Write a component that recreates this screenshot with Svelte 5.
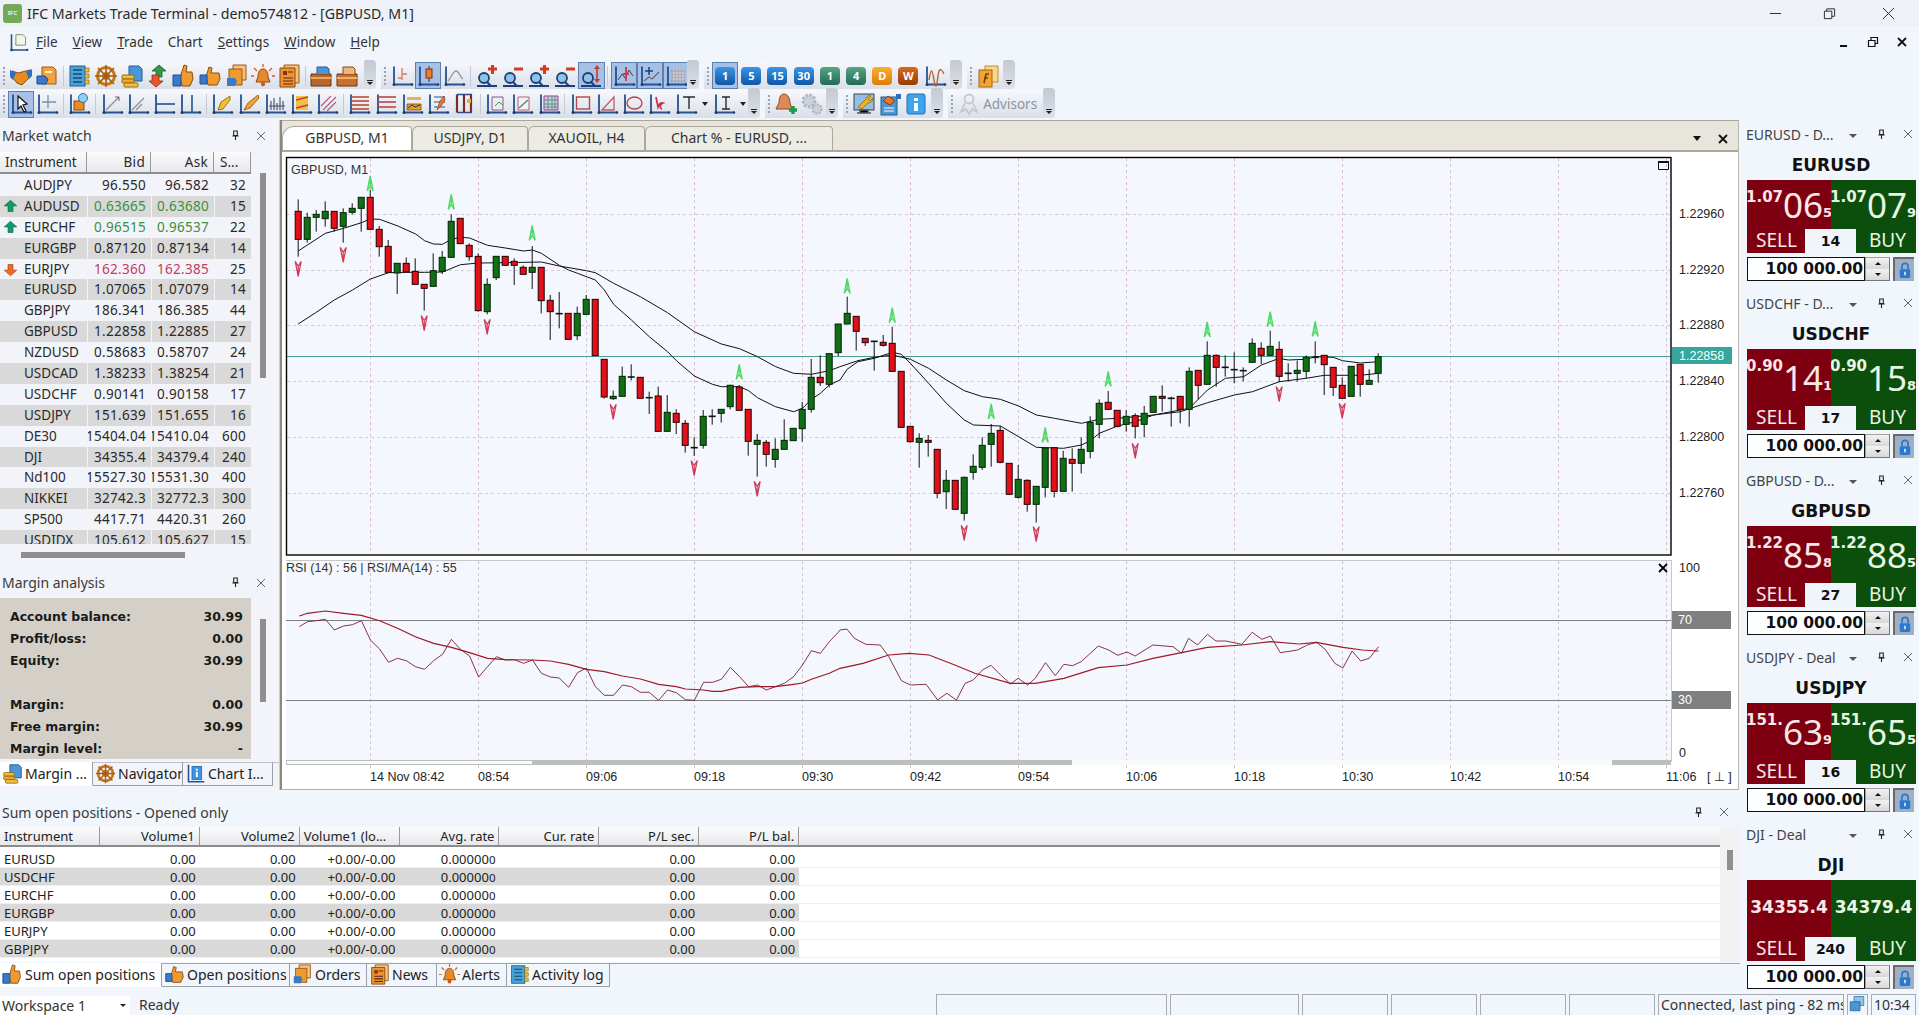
<script>
  const ax =
    '<path d="M4 2.5V20.5H22" fill="none" stroke="#27528f" stroke-width="1.8"/><circle cx="4" cy="20.5" r="1.5" fill="#1d3f75"/><circle cx="22" cy="20.5" r="1.3" fill="#1d3f75"/>';
  const mag =
    '<circle cx="9" cy="14" r="5" fill="#8fc4ea" stroke="#1d3f75" stroke-width="1.8"/><path d="M12 18l4 4M2 22h20" stroke="#1d3f75" stroke-width="2"/>';

  const ICONS = {
    handshake:
      '<path d="M3 7l6 2 4-1 8-2-1 8-7 7-5-2-5-6z" fill="#e98a1e" stroke="#8a4a10"/><path d="M1 6l6 3-3 7-3-3z" fill="#2f6fc0"/><path d="M23 5l-6 3 3 7 3-3z" fill="#2f6fc0"/>',
    dochand:
      '<path d="M7 3h11l3 3v14H7z" fill="#f3a33b" stroke="#9a5a14"/><path d="M2 12h8l3 3-2 5H2z" fill="#3a7ac8" stroke="#1d4f8f"/><path d="M10 7h7v2h-7z" fill="#fff3d8"/>',
    book:
      '<rect x="3" y="2" width="15" height="20" fill="#4aa3d8" stroke="#1f5f8f"/><path d="M6 6h9M6 10h9M6 14h9M6 18h9" stroke="#134a78" stroke-width="1.4"/><path d="M18 4h4v4h-4zM18 10h4v4h-4zM18 16h4v4h-4z" fill="#e9c13a" stroke="#8a6a10" stroke-width=".7"/>',
    wheel:
      '<circle cx="12" cy="12" r="8.5" fill="none" stroke="#c87414" stroke-width="3"/><circle cx="12" cy="12" r="3.4" fill="#f0b03a" stroke="#8a4a10"/><path d="M12 1v22M1 12h22M4 4l16 16M20 4L4 20" stroke="#a85c10" stroke-width="1.6"/>',
    coins:
      '<path d="M9 2h10l3 3v12H9z" fill="#4a96d8" stroke="#1f5f8f"/><rect x="2" y="11" width="12" height="4" rx="1" fill="#f2c040" stroke="#9a6a10"/><rect x="2" y="15" width="12" height="4" rx="1" fill="#eea52f" stroke="#9a6a10"/><rect x="4" y="19" width="14" height="4" rx="1" fill="#f2c040" stroke="#9a6a10"/>',
    updown:
      '<path d="M13 1l7 6h-4v6H10V7H6z" fill="#2f9a4a" stroke="#14602a" stroke-width=".8"/><path d="M10 23l-7-6h3v-6h7v6h4z" fill="#e8552a" stroke="#8a2a10" stroke-width=".8"/>',
    thumb:
      '<path d="M12 1l3 1-1 6h6l1 7-3 7H10l-2-8z" fill="#ef9a2e" stroke="#8a4a10"/><path d="M1 11h8v11H1z" fill="#3a7ac8" stroke="#1d4f8f"/>',
    thumb2:
      '<path d="M11 3l3 1-1 5h8l1 6-3 6H10l-2-8z" fill="#ef9a2e" stroke="#8a4a10"/><path d="M2 11h7v9H2z" fill="#3a7ac8" stroke="#1d4f8f"/>',
    orders:
      '<path d="M8 1h13v15H8z" fill="#f6c27a" stroke="#9a5a14"/><path d="M4 5h13v16H4z" fill="#f09a2e" stroke="#9a5a14"/><path d="M2 14h8l2 3-2 5H2z" fill="#3a7ac8"/>',
    bell:
      '<path d="M12 5c4 0 5 4 5 8l2 5H5l2-5c0-4 1-8 5-8z" fill="#e8882a" stroke="#8a4a10"/><circle cx="12" cy="20" r="2.2" fill="#c85a14"/><path d="M12 0v3M3 4l3 3M21 4l-3 3M0 12h3M21 12h3" stroke="#e85a2a" stroke-width="1.4"/>',
    news:
      '<path d="M7 1h15v18H7z" fill="#f6c27a" stroke="#9a5a14"/><path d="M3 4h15v19H3z" fill="#ee9233" stroke="#8a4a10"/><path d="M6 7h4v4H6z" fill="#7a3a10"/><path d="M11 8h5M6 14h10M6 17h10M6 20h10" stroke="#5a2a08" stroke-width="1.2"/>',
    case1:
      '<path d="M2 10h20v12H2z" fill="#b8662a" stroke="#6a3410"/><path d="M8 10V3h10l2 2v5" fill="#4a96d8" stroke="#1f5f8f"/><path d="M2 14h20" stroke="#e8a860" stroke-width="2"/>',
    case2:
      '<path d="M2 10h20v12H2z" fill="#c8702e" stroke="#6a3410"/><path d="M8 10V3h10l2 2v5" fill="#f0b478" stroke="#8a4a10"/><path d="M2 14h20" stroke="#eeb070" stroke-width="2"/>',
    a_bars: ax + '<path d="M12 4v12M12 10h5M12 14H8" stroke="#d8804a" stroke-width="1.3" fill="none"/>',
    a_candle: ax + '<path d="M13 2v16" stroke="#333"/><rect x="10" y="5" width="6" height="9" fill="#e8802a" stroke="#7a2a10"/>',
    a_line: ax + '<path d="M6 17c3-3 5-10 8-10s4 6 7 8" fill="none" stroke="#9a9a9a" stroke-width="1.4"/>',
    zin: mag + '<path d="M13 5h9M17.5 1v9" stroke="#d83a20" stroke-width="3"/>',
    zout: mag + '<path d="M13 5h9" stroke="#d83a20" stroke-width="3"/>',
    zarrow: mag + '<path d="M18 2v16" stroke="#c83a2a" stroke-width="1.6"/><path d="M15 5l3-4 3 4zM15 15l3 4 3-4z" fill="#c83a2a"/>',
    a_ind: ax + '<path d="M6 16l4-6 3 4 4-8 4 6" fill="none" stroke="#444" stroke-width="1"/><path d="M14 3v14M11 10h6" stroke="#c83a4a" stroke-width="1.8"/>',
    a_ind2: ax + '<path d="M6 17l5-4 3 2 7-7" fill="none" stroke="#666" stroke-width="1.1"/><path d="M11 3v8M7 7h8" stroke="#1d3f75" stroke-width="1.5"/>',
    a_grid: ax + '<path d="M7 6h14v12H7z" fill="#a0a0a8"/><path d="M7 9h14M7 12h14M7 15h14M10 6v12M13 6v12M16 6v12M19 6v12" stroke="#d8d8e0" stroke-width=".8"/>',
    a_wave: ax + '<path d="M6 16c2-12 3-12 5 0s3 4 4-4 3-8 6-2" fill="none" stroke="#b0602a" stroke-width="1.3"/>',
    layers:
      '<rect x="9" y="2" width="13" height="16" fill="#f6d88a" stroke="#c88a2a"/><rect x="3" y="6" width="13" height="17" fill="#f0a52e" stroke="#a8641a"/><path d="M8 19l2-9h3M8 14h4" stroke="#7a3a10" stroke-width="1.6" fill="none"/>',
    a_cursor: ax + '<path d="M9 4l9 8-4 1 3 6-2 1-3-6-3 3z" fill="#fff" stroke="#111" stroke-width="1.2"/>',
    a_cross: ax + '<path d="M13 3v13M7 10h14" stroke="#7a8fa8" stroke-width="1.3"/>',
    a_obj: ax + '<rect x="7" y="9" width="10" height="9" fill="#ef8a1e" stroke="#8a4a10"/><circle cx="16" cy="6" r="4.5" fill="#8fd0f0" stroke="#2a6fa8"/>',
    a_l1: ax + '<path d="M6 18L19 5" stroke="#8a8f98" stroke-width="1.2"/><path d="M15 5h4v4" fill="none" stroke="#8a5a5a"/>',
    a_l2: ax + '<path d="M6 18L18 6M10 18l6-6" stroke="#8a8f98" stroke-width="1.2"/>',
    a_h: ax + '<path d="M4 12h19" stroke="#27528f" stroke-width="1.6"/>',
    a_v: ax + '<path d="M14 3v17" stroke="#27528f" stroke-width="1.6"/>',
    a_pen1: ax + '<path d="M8 17l3-8 9-6 0 4-7 9z" fill="#f0c030" stroke="#a0741a" transform="translate(0 1)"/>',
    a_pen2: ax + '<path d="M7 18l4-7 10-8 1 3-9 10z" fill="#eea52f" stroke="#a0641a"/>',
    a_fan: ax + '<path d="M8 18V9M11 18V6M14 18v-7M17 18V5M20 18v-9M6 14h16" stroke="#3a4f6a" stroke-width="1.1"/>',
    a_chan: ax + '<path d="M7 4h12v14H7z" fill="#f4c040"/><path d="M7 8l12-3M7 16l12-3" stroke="#c83a4a" stroke-width="1.5"/>',
    a_lines: ax + '<path d="M6 14L16 4M8 18L21 5M12 19l9-9" stroke="#b05a7a" stroke-width="1.1"/>',
    a_hl1: ax + '<path d="M4 5h18M4 9h18M4 13h18M4 17h18" stroke="#b8452a" stroke-width="1.3"/>',
    a_hl2: ax + '<path d="M4 5h18M4 10h18M4 15h18" stroke="#b83a3a" stroke-width="1.3"/>',
    a_hl3: ax + '<path d="M7 5h14v3H7z" fill="#e8b05a"/><path d="M7 12h14v6H7z" fill="#e89a3a" stroke="#7a4a10" stroke-width=".8"/><path d="M8 16l4-3 3 2 5-2" stroke="#333" fill="none"/>',
    a_hl4: ax + '<path d="M8 5h11M8 10h11M8 15h11" stroke="#27528f" stroke-width="1.1"/><path d="M11 18l3-9 4-5 1 4-4 6z" fill="#e8782a" stroke="#a0341a" stroke-width=".7"/>',
    a_hl5: '<path d="M5 2.5h15M5 20.5h15" stroke="#27528f" stroke-width="1.6"/><path d="M5 2.5V20.5M12 2.5V20.5M19 2.5V20.5" stroke="#7a2a2a" stroke-width="2.2"/><path d="M15 7h4v4h-4z" fill="#e8b03a"/>',
    a_fib1: ax + '<path d="M8 5h11v13H8z" fill="#e8eef8" stroke="#8a5a7a"/><path d="M11 14l4-4 4 3" stroke="#4a8a4a" fill="none"/>',
    a_fib2: ax + '<path d="M8 5h11v13H8z" fill="#f4f0f4" stroke="#b0607a"/><path d="M9 16l9-8" stroke="#3a8a4a" stroke-width="1.2"/>',
    a_fib3: ax + '<path d="M7 4h14v14H7z" fill="#d8c8e0" stroke="#8a4a8a"/><path d="M7 8h14M7 12h14M7 15h14M11 4v14M15 4v14M18 4v14" stroke="#3a8a7a" stroke-width=".8"/>',
    a_rect: ax + '<rect x="7.5" y="5" width="13" height="12" fill="none" stroke="#b8454a" stroke-width="1.4"/>',
    a_tri: ax + '<path d="M7 18L19 5v13z" fill="none" stroke="#b8606a" stroke-width="1.3"/>',
    a_ell: ax + '<ellipse cx="13.5" cy="11" rx="7.5" ry="6" fill="none" stroke="#b8454a" stroke-width="1.4"/>',
    a_sig: ax + '<path d="M9 5l2 10c1-3 2-5 5-4-3 1-4 5-1 6" fill="none" stroke="#c8304a" stroke-width="1.7"/>',
    a_t: ax + '<path d="M9 5h12M15 5v12" stroke="#2b2b2b" stroke-width="1.4"/>',
    a_i: ax + '<path d="M10 5h8M10 17h8M14 5v12" stroke="#2b2b2b" stroke-width="1.4"/>',
    bellplus:
      '<path d="M10 2c4 0 6 5 6 9l2 6H2l3-6c0-4 1-9 5-9z" fill="#dc8a5a" stroke="#8a4a20"/><path d="M15 18h8M19 14v8" stroke="#1f9a4a" stroke-width="3.4"/>',
    gears:
      '<circle cx="9" cy="9" r="6" fill="#ccd0d8" stroke="#b0b4bc" stroke-width="3" stroke-dasharray="2.4 1.6"/><circle cx="17" cy="17" r="4.5" fill="#ccd0d8" stroke="#b0b4bc" stroke-width="2.4" stroke-dasharray="2 1.4"/>',
    wrench:
      '<rect x="2" y="2" width="20" height="16" fill="#8fc0e8" stroke="#444"/><path d="M8 18h8v3H8zM5 21h14" stroke="#555" stroke-width="1.5"/><path d="M6 15l8-8c0-3 3-4 5-3l-3 3 2 2 3-3c0 3-2 5-5 5l-6 6z" fill="#f0b020" stroke="#8a6a10" stroke-width=".8"/>',
    note:
      '<rect x="3" y="5" width="16" height="18" fill="#4a96d8" stroke="#1f5f8f"/><path d="M6 16h10M6 19h10" stroke="#fff"/><path d="M5 9l5-5 7 5-5 4z" fill="#e8782a" stroke="#8a3a10"/><rect x="18" y="2" width="5" height="5" fill="#2a6fc0"/>',
    info:
      '<rect x="3" y="2" width="18" height="20" rx="2" fill="#3ea4ec" stroke="#1f6fb8"/><path d="M10 6h4v3h-4zM10 11h4v8h-4z" fill="#fff"/>',
    advisor:
      '<circle cx="12" cy="7" r="4.5" fill="none" stroke="#c4c8d0" stroke-width="1.8"/><path d="M8 11l-4 9 5-3 3 5 3-5 5 3-4-9" fill="none" stroke="#c4c8d0" stroke-width="1.8"/>',
    ledger:
      '<path d="M4 2V21.5H22" fill="none" stroke="#27528f" stroke-width="1.8"/><rect x="8" y="4" width="11" height="15" fill="#3e94e0" stroke="#1f6fb8"/><path d="M13.5 6.5v2M13.5 10v6" stroke="#fff" stroke-width="2.2"/>',
    mkup: '<path d="M12 2l10 9h-6v9H8v-9H2z" fill="#139a68" stroke="#0a6a48"/>',
    mkdn: '<path d="M12 22l10-9h-6V4H8v9H2z" fill="#ee6a2a" stroke="#a83a10"/>',
  };

  const tf = (t, c, sel = false) => ({ tf: t, c, sel });

  const toolbars = [
    [
      { cls: "tb-a", items: ["handshake", "dochand", "|", "book", "wheel", "coins", "updown", "thumb", "thumb2", "orders", "bell", "news", "|", "case1", "case2"] },
      { cls: "tb-b", items: ["a_bars", "*a_candle", "a_line", "|", "zin", "zout", "zin", "zout", "*zarrow", "|", "*a_ind", "*a_ind2", "*a_grid"] },
      { cls: "tb-c", items: [tf("1", "blue", true), tf("5", "blue"), tf("15", "blue"), tf("30", "blue"), tf("1", "teal"), tf("4", "teal"), tf("D", "orange"), tf("W", "rust"), "a_wave"] },
      { cls: "tb-d", items: ["layers"] },
    ],
    [
      { cls: "tb-e", items: ["*a_cursor", "a_cross", "|", "a_obj", "|", "a_l1", "a_l2", "a_h", "a_v", "|", "a_pen1", "a_pen2", "a_fan", "a_chan", "a_lines", "|", "a_hl1", "a_hl2", "a_hl3", "a_hl4", "a_hl5", "|", "a_fib1", "a_fib2", "a_fib3", "|", "a_rect", "a_tri", "a_ell", "a_sig", "a_t", "v", "a_i", "v"] },
      { cls: "tb-f", items: ["bellplus", "gears"] },
      { cls: "tb-g", items: ["wrench", "note", "info"] },
      { cls: "tb-h", items: ["advisor", "#Advisors"] },
    ],
  ];

  const menu = [
    ["F", "ile"], ["V", "iew"], ["T", "rade"], ["", "Chart"], ["S", "ettings"], ["W", "indow"], ["H", "elp"],
  ];

  // symbol, bid, ask, spread, arrow, tone
  const market = [
    ["AUDJPY", "96.550", "96.582", "32", "", ""],
    ["AUDUSD", "0.63665", "0.63680", "15", "up", "rise"],
    ["EURCHF", "0.96515", "0.96537", "22", "up", "rise"],
    ["EURGBP", "0.87120", "0.87134", "14", "", ""],
    ["EURJPY", "162.360", "162.385", "25", "dn", "fall"],
    ["EURUSD", "1.07065", "1.07079", "14", "", ""],
    ["GBPJPY", "186.341", "186.385", "44", "", ""],
    ["GBPUSD", "1.22858", "1.22885", "27", "", ""],
    ["NZDUSD", "0.58683", "0.58707", "24", "", ""],
    ["USDCAD", "1.38233", "1.38254", "21", "", ""],
    ["USDCHF", "0.90141", "0.90158", "17", "", ""],
    ["USDJPY", "151.639", "151.655", "16", "", ""],
    ["DE30", "15404.04", "15410.04", "600", "", ""],
    ["DJI", "34355.4", "34379.4", "240", "", ""],
    ["Nd100", "15527.30", "15531.30", "400", "", ""],
    ["NIKKEI", "32742.3", "32772.3", "300", "", ""],
    ["SP500", "4417.71", "4420.31", "260", "", ""],
    ["USDIDX", "105.612", "105.627", "15", "", ""],
  ];

  const margin = [
    ["Account balance:", "30.99"], ["Profit/loss:", "0.00"], ["Equity:", "30.99"], ["", ""],
    ["Margin:", "0.00"], ["Free margin:", "30.99"], ["Margin level:", "-"],
  ];

  const deals = [
    { head: "EURUSD - D...", name: "EURUSD", s: ["1.07", "06", "5"], b: ["1.07", "07", "9"], spread: "14", short: true },
    { head: "USDCHF - D...", name: "USDCHF", s: ["0.90", "14", "1"], b: ["0.90", "15", "8"], spread: "17" },
    { head: "GBPUSD - D...", name: "GBPUSD", s: ["1.22", "85", "8"], b: ["1.22", "88", "5"], spread: "27" },
    { head: "USDJPY - Deal", name: "USDJPY", s: ["151.", "63", "9"], b: ["151.", "65", "5"], spread: "16" },
    { head: "DJI - Deal", name: "DJI", flat: ["34355.4", "34379.4"], spread: "240" },
  ];

  const sumRows = ["EURUSD", "USDCHF", "EURCHF", "EURGBP", "EURJPY", "GBPJPY"];
  const sumHead = ["Instrument", "Volume1", "Volume2", "Volume1 (lo...", "Avg. rate", "Cur. rate", "P/L sec.", "P/L bal."];

  const bottomTabs = [
    ["thumb", "Sum open positions", "bt-1"], ["thumb2", "Open positions", "bt-2"], ["orders", "Orders", "bt-3"],
    ["news", "News", "bt-4"], ["bell", "Alerts", "bt-5"], ["book", "Activity log", "bt-6"],
  ];

  const chartTabs = [
    ["GBPUSD, M1", "ct-1"], ["USDJPY, D1", "ct-2"], ["XAUOIL, H4", "ct-3"], ["Chart % - EURUSD, ...", "ct-4"],
  ];

  // [wickTop, wickBottom, bodyTop, bodyBottom, kind] measured off the chart
  const candles = [
    [238,410,274,358,"r"],[278,368,292,358,"g"],[270,335,283,292,"g"],[244,320,274,296,"g"],[274,335,274,325,"r"],
    [265,368,278,319,"g"],[250,284,265,277,"g"],[232,335,232,265,"g"],[210,328,232,328,"r"],[318,410,328,380,"r"],
    [360,457,379,457,"r"],[430,522,430,459,"g"],[412,456,430,456,"r"],[415,493,454,493,"r"],[493,572,493,505,"r"],
    [400,499,452,499,"g"],[393,462,412,454,"g"],[283,412,304,412,"g"],[295,371,295,371,"r"],[370,422,376,410,"r"],
    [400,575,409,572,"r"],[475,583,493,575,"g"],[409,480,409,473,"g"],[409,436,409,436,"r"],[415,495,424,436,"r"],
    [436,463,442,463,"r"],[378,507,442,457,"g"],[442,580,442,542,"r"],[525,660,541,575,"r"],[516,625,581,581,"x"],
    [580,658,580,658,"r"],[560,660,580,647,"g"],[525,583,538,583,"g"],[538,707,538,707,"r"],[718,836,718,831,"r"],
    [812,840,829,836,"g"],[740,829,769,829,"g"],[733,781,771,771,"x"],[772,835,772,835,"r"],[815,882,833,833,"x"],
    [800,934,828,934,"r"],[825,934,877,934,"g"],[868,942,880,907,"r"],[900,998,910,976,"r"],[952,1008,983,983,"x"],
    [870,986,889,976,"g"],[868,914,889,889,"x"],[868,908,868,880,"g"],[794,868,796,860,"g"],[795,871,801,871,"r"],
    [868,1007,868,964,"r"],[942,1070,961,973,"g"],[960,1040,967,1003,"r"],[955,1043,988,1018,"g"],[898,988,961,988,"g"],
    [925,962,925,962,"g"],[846,965,868,926,"g"],[717,878,772,868,"g"],[706,798,772,788,"r"],[701,802,701,793,"g"],
    [612,708,612,698,"g"],[530,612,580,612,"g"],[589,692,589,634,"r"],[655,678,655,668,"r"],[664,752,664,664,"x"],
    [645,680,667,676,"r"],[620,754,670,754,"r"],[754,922,754,922,"r"],[919,968,919,965,"r"],[940,1043,955,967,"g"],
    [945,1010,961,967,"r"],[988,1135,988,1120,"r"],[1050,1167,1081,1115,"g"],[1081,1168,1081,1168,"r"],[1070,1202,1072,1180,"g"],
    [1003,1079,1039,1057,"g"],[952,1050,976,1042,"g"],[912,1040,940,973,"g"],[918,1030,931,1027,"r"],[1030,1125,1030,1123,"r"],
    [1035,1136,1078,1132,"g"],[1078,1175,1081,1153,"r"],[1099,1208,1099,1153,"g"],[984,1132,984,1102,"g"],[983,1132,983,1114,"r"],
    [992,1114,1015,1114,"g"],[985,1115,1018,1030,"r"],[952,1060,988,1030,"g"],[889,1015,907,994,"g"],[838,955,850,913,"g"],
    [813,868,847,868,"r"],[871,922,871,919,"r"],[870,935,889,913,"g"],[880,955,887,919,"r"],[858,952,880,913,"g"],
    [829,877,829,877,"g"],[796,875,829,835,"r"],[830,920,835,835,"x"],[829,910,829,868,"r"],[742,920,754,868,"g"],
    [751,838,751,796,"r"],[664,793,706,793,"g"],[703,800,706,742,"r"],[706,770,742,742,"x"],[697,790,749,749,"x"],
    [742,784,752,752,"x"],[655,727,670,727,"g"],[667,732,685,706,"r"],[632,708,679,706,"g"],[664,787,688,769,"r"],
    [730,785,760,760,"x"],[722,785,751,760,"g"],[706,775,712,754,"g"],[664,730,712,712,"x"],[706,825,706,734,"r"],
    [742,828,742,802,"r"],[772,835,796,835,"r"],[739,829,739,829,"g"],[733,830,733,793,"r"],[748,793,781,793,"g"],
    [700,788,710,760,"g"],
  ];

  const candleX = (i) => 298.2 + 9 * i;
  const cy = (v) => 120 + v / 3;

  const upMarks = [[8,168],[17,223],[26,316],[49,733],[61,475],[66,563],[77,852],[83,922],[90,754],[101,606],[108,575],[113,604]];
  const downMarks = [[0,424],[5,382],[14,587],[21,598],[35,853],[44,1022],[51,1084],[74,1216],[82,1220],[93,970],[109,800],[116,850]];

  const line = (parts) =>
    parts
      .flatMap(([ox, sx, oy, pts]) => pts.map(([x, y]) => `${(ox + x / sx).toFixed(1)},${(oy + y / 3).toFixed(1)}`))
      .join(" ");

  const fastMa = line([
    [280, 2.8, 120, [[51,393],[127,340],[178,325],[228,308],[253,297],[279,298],[330,318],[380,342],[405,362],[430,372],[455,373],[480,358],[505,352],[531,354],[556,365],[581,376],[631,384],[682,393],[707,390],[732,400],[782,436],[808,450],[833,460],[883,480],[908,510],[934,553],[984,600],[1034,650],[1085,695],[1110,722],[1160,768],[1211,793],[1236,800],[1287,800],[1312,812],[1337,833],[1387,860],[1438,875],[1463,865],[1488,838],[1513,820],[1538,795]]],
    [840, 2.8, 120, [[0,780],[20,748],[50,725],[96,715],[147,697],[172,703],[197,730],[248,790],[298,850],[348,900],[374,915],[449,918],[500,950],[550,982],[626,985],[676,975],[701,962],[726,940],[777,918],[827,905],[878,885],[953,870],[978,865],[1029,810],[1079,775],[1130,770],[1180,735],[1230,715],[1255,720],[1305,718],[1331,710],[1381,712],[1407,722],[1457,729],[1508,725]]],
  ]);
  const slowMa = line([
    [280, 2.8, 120, [[51,612],[100,578],[152,540],[203,510],[253,477],[304,458],[354,457],[405,457],[455,456],[505,434],[556,429],[631,428],[732,426],[782,438],[858,452],[883,458],[934,490],[1009,530],[1085,578],[1160,635],[1236,672],[1287,686],[1337,710],[1388,740],[1438,760],[1488,763],[1538,752]]],
    [840, 2.8, 120, [[0,740],[50,722],[96,712],[147,705],[197,718],[248,745],[298,780],[348,812],[399,830],[449,838],[500,858],[550,885],[601,895],[676,910],[726,898],[777,895],[827,890],[878,885],[953,875],[1029,848],[1104,825],[1155,815],[1230,785],[1305,775],[1356,766],[1457,766],[1508,760]]],
  ]);
  const rsi = line([
    [280, 2.8, 550, [[54,230],[77,215],[102,212],[127,208],[152,240],[178,228],[203,224],[228,212],[253,270],[279,297],[304,337],[329,325],[354,332],[379,350],[405,358],[430,332],[455,313],[480,268],[505,298],[531,318],[556,381],[581,350],[606,320],[631,330],[656,329],[682,340],[707,330],[732,370],[757,381],[782,384],[808,412],[833,368],[858,354],[883,410],[908,436],[934,436],[959,405],[984,410],[1009,427],[1034,427],[1060,451],[1085,420],[1110,428],[1135,449],[1160,451],[1186,397],[1211,397],[1236,388],[1261,352],[1287,380],[1312,410],[1337,405],[1362,420],[1387,410],[1412,400],[1438,380],[1463,345],[1488,302],[1513,310],[1538,275],[1563,247]]],
    [840, 1.742, 550, [[0,240],[12,237],[25,265],[45,283],[70,285],[85,320],[107,392],[123,405],[150,403],[170,450],[186,430],[203,450],[218,400],[232,390],[248,360],[263,346],[280,375],[297,402],[310,385],[327,405],[340,385],[358,338],[375,377],[390,343],[405,347],[420,335],[450,288],[468,300],[484,316],[500,306],[514,318],[545,285],[580,290],[595,310],[607,265],[623,285],[640,253],[655,273],[672,273],[700,283],[718,247],[735,268],[750,258],[767,308],[797,300],[815,284],[830,277],[845,298],[862,340],[876,354],[892,303],[907,333],[922,325],[938,290]]],
  ]);
  const rsiMa = line([
    [280, 2.8, 550, [[54,198],[77,190],[127,183],[178,190],[228,196],[279,212],[329,235],[379,260],[430,280],[480,292],[531,308],[581,325],[631,329],[707,330],[757,333],[808,343],[858,358],[908,365],[959,378],[1009,387],[1060,403],[1110,410],[1135,417],[1186,420],[1211,424],[1236,424],[1287,412],[1337,410],[1387,410],[1438,403],[1463,399],[1488,388],[1538,370]]],
    [840, 1.742, 550, [[0,355],[40,340],[85,315],[120,310],[155,315],[200,345],[235,370],[297,400],[340,400],[390,385],[450,353],[500,345],[545,325],[595,308],[640,292],[700,285],[750,275],[800,282],[830,277],[876,292],[910,300],[938,303]]],
  ]);

  const gridX = [370, 478, 586, 694, 802, 910, 1018, 1126, 1234, 1342, 1450, 1558, 1666];
  const gridY = [[214, "1.22960"], [270, "1.22920"], [325, "1.22880"], [381, "1.22840"], [437, "1.22800"], [493, "1.22760"]];
  const times = ["14 Nov 08:42", "08:54", "09:06", "09:18", "09:30", "09:42", "09:54", "10:06", "10:18", "10:30", "10:42", "10:54", "11:06"];
</script>

{#snippet ico(name)}
  <svg class="ico" viewBox="0 0 24 24">{@html ICONS[name]}</svg>
{/snippet}

{#snippet pin()}
  <svg class="pin" viewBox="0 0 10 12"><path d="M3 1h4v5H3zM1.5 6.5h7M5 7v4" fill="none" stroke="#222" stroke-width="1.2" /></svg>
{/snippet}

{#snippet closeX()}
  <svg class="cross" viewBox="0 0 10 10"><path d="M1 1l8 8M9 1l-8 8" stroke="#666" stroke-width="1" /></svg>
{/snippet}

{#snippet chevron()}
  <span class="chev"><i></i><b></b></span>
{/snippet}

<div class="app">
  <header class="title">
    <div class="logo"><span>IFC</span></div>
    <span class="title-text">IFC Markets Trade Terminal - demo574812 - [GBPUSD, M1]</span>
    <div class="win-btns">
      <svg viewBox="0 0 14 14"><path d="M1 7h12" stroke="#222" stroke-width="1" /></svg>
      <svg viewBox="0 0 14 14"><path d="M1.5 4.5h8v8h-8zM4 4.5V2h8.5v8H9.5" fill="none" stroke="#222" stroke-width="1" /></svg>
      <svg viewBox="0 0 14 14"><path d="M1 1l12 12M13 1L1 13" stroke="#222" stroke-width="1" /></svg>
    </div>
  </header>

  <nav class="menubar">
    <svg class="menu-doc" viewBox="0 0 24 24">{@html ICONS.a_bars}<path d="M9 3h8l3 3v9H9z" fill="#f2f5ea" stroke="#7a8a5a" /></svg>
    {#each menu as [u, rest]}
      <span class="menu-item"><u>{u}</u>{rest}</span>
    {/each}
    <div class="mdi-btns">
      <svg viewBox="0 0 12 12"><path d="M2 10h7" stroke="#111" stroke-width="2" /></svg>
      <svg viewBox="0 0 12 12"><path d="M1.5 4.5h6.5v6H1.5zM4 4V1.5h6.5v6H8.5" fill="none" stroke="#111" stroke-width="1.2" /></svg>
      <svg viewBox="0 0 12 12"><path d="M2 2l8 8M10 2l-8 8" stroke="#111" stroke-width="1.8" /></svg>
    </div>
  </nav>

  {#each toolbars as row}
    <div class="tb-row">
      {#each row as bar}
        <div class="toolbar {bar.cls}">
          <span class="grip"></span>
          {#each bar.items as it}
            {#if typeof it === "object"}
              <span class="slot" class:sel={it.sel}><span class="tf {it.c}">{it.tf}</span></span>
            {:else if it === "|"}
              <span class="tb-sep"></span>
            {:else if it === "v"}
              <span class="drop"></span>
            {:else if it[0] === "#"}
              <span class="tb-text">{it.slice(1)}</span>
            {:else}
              <span class="slot" class:sel={it[0] === "*"}>{@render ico(it.replace("*", ""))}</span>
            {/if}
          {/each}
          {@render chevron()}
        </div>
      {/each}
    </div>
  {/each}

  <div class="work">
    <div class="center">
      <div class="upper">
        <aside class="left">
          <section class="market">
            <div class="p-head"><span>Market watch</span>{@render pin()}{@render closeX()}</div>
            <div class="mw-body">
              <div class="mw-table">
                <div class="mw-row mw-head">
                  <span>Instrument</span><span class="num">Bid</span><span class="num">Ask</span><span>S...</span>
                </div>
                <div class="mw-rows">
                  {#each market as [sym, bid, ask, spread, dir, tone], i}
                    <div class="mw-row" class:alt={i % 2 === 1}>
                      <span class="sym">
                        <span class="mk-slot">
                          {#if dir === "up"}<svg class="mk" viewBox="0 0 24 24">{@html ICONS.mkup}</svg>{/if}
                          {#if dir === "dn"}<svg class="mk" viewBox="0 0 24 24">{@html ICONS.mkdn}</svg>{/if}
                        </span>{sym}
                      </span>
                      <span class="num {tone}">{bid}</span>
                      <span class="num {tone}">{ask}</span>
                      <span class="num">{spread}</span>
                    </div>
                  {/each}
                </div>
              </div>
              <div class="vbar mw-vbar"></div>
            </div>
            <div class="hbar"></div>
          </section>

          <section class="margin">
            <div class="p-head"><span>Margin analysis</span>{@render pin()}{@render closeX()}</div>
            <div class="m-body">
              <div class="m-list">
                {#each margin as [k, v]}
                  <div class="m-row"><span>{k}</span><span>{v}</span></div>
                {/each}
              </div>
              <div class="vbar m-vbar"></div>
            </div>
            <div class="tabs left-tabs">
              <span class="tab on lt-1">{@render ico("coins")}Margin ...</span>
              <span class="tab lt-2">{@render ico("wheel")}Navigator</span>
              <span class="tab lt-3">{@render ico("ledger")}Chart I...</span>
            </div>
          </section>
        </aside>

        <main class="main">
          <div class="tabstrip">
            {#each chartTabs as [label, cls], i}
              <span class="ctab {cls}" class:on={i === 0}>{label}</span>
            {/each}
            <span class="strip-drop"></span>
            <svg class="strip-x" viewBox="0 0 10 10"><path d="M1 1l8 8M9 1l-8 8" stroke="#111" stroke-width="1.8" /></svg>
          </div>

          <svg class="chart" viewBox="282 152 1457 637">
            <rect x="286.5" y="157.5" width="1384.5" height="397.5" fill="#f5f7fe" />
            <rect x="286" y="560" width="1385" height="200" fill="#f5f7fe" />

            {#each gridX as x}
              <path d="M{x + 0.5} 158V555M{x + 0.5} 561V760" class="grid-v" />
            {/each}
            {#each gridY as [y, label]}
              <path d="M287 {y + 0.5}H1671" class="grid-h" />
              <text x="1679" y={y + 4} class="axis">{label}</text>
            {/each}

            <path d="M287 356.5H1671" stroke="#4a9d97" stroke-width="1" />
            <polyline points={slowMa} class="ma" />
            <polyline points={fastMa} class="ma" />

            {#each candles as [wt, wb, bt, bb, kind], i}
              {@const x = candleX(i)}
              <path d="M{x} {cy(wt)}V{cy(wb)}" stroke="#111" stroke-width="1" />
              {#if kind === "x"}
                <rect x={x - 3.5} y={cy(bt) - 0.8} width="7" height="1.6" fill="#111" />
              {:else}
                <rect x={x - 3} y={cy(bt)} width="6" height={Math.max(cy(bb) - cy(bt), 1.5)} class={kind === "r" ? "red" : "green"} />
              {/if}
            {/each}

            {#each upMarks as [i, top]}
              {@const x = candleX(i)}
              {@const t = cy(top)}
              <path d="M{x - 3} {t + 15}L{x} {t}L{x + 3} {t + 15}L{x} {t + 10}ZM{x} {t + 3}V{t + 10}" class="mark-up" />
            {/each}
            {#each downMarks as [i, top]}
              {@const x = candleX(i)}
              {@const t = cy(top)}
              <path d="M{x - 3} {t}L{x} {t + 15}L{x + 3} {t}L{x} {t + 5}ZM{x} {t + 5}V{t + 12}" class="mark-dn" />
            {/each}

            <rect x="286.5" y="157.5" width="1384.5" height="397.5" fill="none" stroke="#000" stroke-width="1.4" />
            <text x="291" y="174" class="label">GBPUSD, M1</text>
            <path d="M1658.5 161.5h10v8h-10z" fill="none" stroke="#111" /><path d="M1658 162h11" stroke="#111" stroke-width="2" />

            <rect x="1672" y="347" width="60" height="17" fill="#35a79c" />
            <text x="1679" y="360" class="axis tag">1.22858</text>

            <path d="M286 560.5H1671" stroke="#c8c8c8" />
            <path d="M286 620.5H1671M286 700.5H1671" stroke="#808080" stroke-width="1.2" />
            <polyline points={rsiMa} class="rsi-ma" />
            <polyline points={rsi} class="rsi" />
            <text x="286" y="572" class="label">RSI (14) : 56 | RSI/MA(14) : 55</text>
            <path d="M1659 564l8 8M1667 564l-8 8" stroke="#000" stroke-width="1.8" />
            <path d="M1671.5 560V762" stroke="#c8c8c8" />

            <text x="1679" y="572" class="axis">100</text>
            <rect x="1672" y="611" width="59" height="18" fill="#808080" />
            <text x="1678" y="624" class="axis tag">70</text>
            <rect x="1672" y="691" width="59" height="18" fill="#808080" />
            <text x="1678" y="704" class="axis tag">30</text>
            <text x="1679" y="757" class="axis">0</text>

            <rect x="286" y="760" width="1385" height="5" fill="#bdbdbd" />
            <rect x="287" y="761" width="245" height="3" fill="#fafafa" />
            <rect x="1072" y="760" width="540" height="5" fill="#fafafa" />

            {#each times as t, i}
              <path d="M{gridX[i] + 0.5} 765V770" class="grid-v" />
              <text x={gridX[i]} y="781" class="axis">{t}</text>
            {/each}
            <text x="1707" y="781" class="axis scale-btn">[ ⊥ ]</text>
          </svg>
        </main>
      </div>

      <section class="bottom">
        <div class="b-head"><span>Sum open positions - Opened only</span>{@render pin()}{@render closeX()}</div>
        <div class="b-body">
          <div class="b-table">
            <div class="b-row b-titles">
              {#each sumHead as h, i}<span class:num={i !== 0 && i !== 3}>{h}</span>{/each}
            </div>
            <div class="b-rows">
              {#each sumRows as sym, i}
                <div class="b-row" class:alt={i % 2 === 1}>
                  <span>{sym}</span>
                  <span class="num">0.00</span>
                  <span class="num">0.00</span>
                  <span class="num">+0.00/-0.00</span>
                  <span class="num">0.00000<small>0</small></span>
                  <span></span>
                  <span class="num">0.00</span>
                  <span class="num">0.00</span>
                </div>
              {/each}
            </div>
          </div>
          <div class="vbar b-vbar"></div>
        </div>
        <div class="tabs bottom-tabs">
          {#each bottomTabs as [icon, label, cls], i}
            <span class="tab {cls}" class:on={i === 0}>{@render ico(icon)}{label}</span>
          {/each}
        </div>
      </section>
    </div>

    <aside class="deals">
      {#each deals as d}
        <div class="deal">
          <div class="d-head">
            <span class="d-name">{d.head}</span>
            <span class="d-drop"></span>
            {@render pin()}
            {@render closeX()}
          </div>
          <div class="d-title">{d.name}</div>
          <div class="quote" class:short={d.short}>
            <div class="side sell">
              <div class="price">
                {#if d.flat}
                  <span class="flat">{d.flat[0]}</span>
                {:else}
                  <span class="p-sm">{d.s[0]}</span><span class="p-big">{d.s[1]}</span><span class="p-end">{d.s[2]}</span>
                {/if}
              </div>
              <div class="verb">SELL</div>
            </div>
            <div class="side buy">
              <div class="price">
                {#if d.flat}
                  <span class="flat">{d.flat[1]}</span>
                {:else}
                  <span class="p-sm">{d.b[0]}</span><span class="p-big">{d.b[1]}</span><span class="p-end">{d.b[2]}</span>
                {/if}
              </div>
              <div class="verb">BUY</div>
            </div>
            <div class="spread">{d.spread}</div>
          </div>
          <div class="vol">
            <div class="vol-box">100 000.00</div>
            <div class="spin"><span><i class="up"></i></span><span><i class="dn"></i></span></div>
            <div class="lock">
              <svg viewBox="0 0 16 20"><path d="M4.5 9V6a3.5 3.5 0 017 0v3" fill="none" stroke="#2a78d0" stroke-width="2" /><rect x="2" y="9" width="12" height="10" rx="1.5" fill="#2a78d0" /><rect x="7" y="12" width="2" height="4" fill="#cfe6ff" /></svg>
            </div>
          </div>
        </div>
      {/each}
    </aside>
  </div>

  <footer class="status">
    <div class="ws"><span>Workspace 1</span><i></i></div>
    <span class="ready">Ready</span>
    <span class="cell c1"></span>
    <span class="cell c2"></span>
    <span class="cell c3"></span>
    <span class="cell c3"></span>
    <span class="cell c3"></span>
    <span class="cell c3"></span>
    <span class="cell c4">Connected, last ping - 82 ms</span>
    <span class="cell c5"><svg viewBox="0 0 24 24"><path d="M8 2h13v12H8z" fill="#8fc4ea" stroke="#2a6fa8" /><path d="M3 9h13v12H3z" fill="#4a96d8" stroke="#1f5f8f" /></svg></span>
    <span class="cell c6">10:34</span>
  </footer>
</div>

<style>
  :global(body) {
    margin: 0;
    background: #f1f5fc;
    overflow: hidden;
  }

  .app {
    width: 1919px;
    height: 1015px;
    display: flex;
    flex-direction: column;
    overflow: hidden;
    font-family: "Noto Sans", "Open Sans", sans-serif;
    font-size: 13.5px;
    color: #222;
    background: #f1f5fc;
  }

  /* title + menu */
  .title {
    height: 26px;
    flex: none;
    display: flex;
    align-items: center;
    background: #eef2f8;
    padding-left: 3px;
  }
  .logo {
    width: 19px;
    height: 19px;
    border-radius: 3px;
    background: #74a957;
    color: #e8f2e0;
    font-size: 6px;
    font-weight: 700;
    display: flex;
    align-items: center;
    justify-content: center;
  }
  .title-text {
    margin-left: 5px;
    font-size: 14.2px;
    color: #2a2a2a;
  }
  .win-btns {
    margin-left: auto;
    display: flex;
    margin-right: 24px;
  }
  .win-btns svg {
    width: 13px;
    height: 13px;
  }
  .win-btns svg:nth-child(1) {
    margin-right: 41px;
  }
  .win-btns svg:nth-child(2) {
    margin-right: 46px;
  }

  .menubar {
    height: 34px;
    flex: none;
    display: flex;
    align-items: center;
    padding: 0 0 2px 8px;
    box-sizing: border-box;
    font-size: 13.5px;
  }
  .menu-doc {
    width: 21px;
    height: 21px;
    margin-right: 7px;
  }
  .menu-item {
    margin-right: 15px;
    color: #333;
  }
  .mdi-btns {
    margin-left: auto;
    display: flex;
    gap: 17px;
    margin-right: 11px;
  }
  .mdi-btns svg {
    width: 12px;
    height: 12px;
  }

  /* toolbars */
  .tb-row {
    height: 30px;
    flex: none;
    display: flex;
    gap: 5px;
  }
  .toolbar {
    height: 27px;
    margin-top: 2px;
    display: flex;
    align-items: center;
    background: linear-gradient(#f6f8fc, #d9dfe9);
    border-radius: 0 4px 4px 0;
    position: relative;
    box-sizing: border-box;
    padding-right: 14px;
  }
  .tb-row + .tb-row .toolbar {
    margin-top: 0;
    height: 28px;
  }
  .tb-a {
    width: 376px;
  }
  .tb-b {
    width: 318px;
  }
  .tb-c {
    width: 258px;
  }
  .tb-d {
    width: 48px;
  }
  .tb-e {
    width: 760px;
  }
  .tb-f {
    width: 73px;
  }
  .tb-g {
    width: 100px;
  }
  .tb-h {
    width: 107px;
  }
  .grip {
    width: 8px;
    height: 20px;
    flex: none;
    background: radial-gradient(circle, #9aa4b4 1px, transparent 1.2px) 1px 0 / 6px 4px;
  }
  .slot {
    width: 26.2px;
    height: 27px;
    flex: none;
    box-sizing: border-box;
    display: flex;
    align-items: center;
    justify-content: center;
  }
  .slot.sel {
    background: #a6c0e6;
    outline: 1px solid #5d7fae;
    outline-offset: -1px;
  }
  .ico {
    width: 24px;
    height: 24px;
    flex: none;
  }
  .tb-sep {
    width: 1px;
    height: 20px;
    flex: none;
    margin: 0 2.5px;
    background: #c3cad6;
  }
  .drop {
    width: 0;
    height: 0;
    margin: 0 3px;
    flex: none;
    border: 3px solid transparent;
    border-top: 4px solid #222;
    border-bottom: 0;
  }
  .tb-text {
    color: #8e949e;
    font-size: 13.5px;
    margin-left: 1px;
  }
  .tf {
    width: 20px;
    height: 18px;
    border-radius: 4px;
    color: #fff;
    font-size: 11px;
    font-weight: 700;
    line-height: 18px;
    text-align: center;
  }
  .tf.blue {
    background: linear-gradient(#3a96e4, #0f56a8);
  }
  .tf.teal {
    background: linear-gradient(#55a684, #226b54);
  }
  .tf.orange {
    background: linear-gradient(#f8b030, #e07a08);
  }
  .tf.rust {
    background: linear-gradient(#d86a18, #963c08);
  }
  .chev {
    position: absolute;
    right: 0;
    top: -2px;
    bottom: 0;
    width: 12px;
    background: linear-gradient(#c4c9d2, #dde1e8);
    border-radius: 2px 4px 4px 0;
  }
  .chev i {
    position: absolute;
    left: 3px;
    bottom: 8px;
    width: 6px;
    height: 1px;
    background: #222;
  }
  .chev b {
    position: absolute;
    left: 3px;
    bottom: 4px;
    border: 3px solid transparent;
    border-top: 3px solid #222;
    border-bottom: 0;
  }

  /* workspace */
  .work {
    height: 870px;
    flex: none;
    display: flex;
  }
  .center {
    width: 1740px;
    flex: none;
    display: flex;
    flex-direction: column;
  }
  .upper {
    height: 670px;
    flex: none;
    display: flex;
  }
  .left {
    width: 280px;
    flex: none;
    box-sizing: border-box;
    border-right: 1px solid #c9ccd2;
    display: flex;
    flex-direction: column;
    background: #f2f4f9;
  }
  .p-head {
    height: 31px;
    display: flex;
    align-items: center;
    padding-left: 2px;
    font-size: 14px;
    color: #3a3a3a;
  }
  .p-head span {
    width: 229px;
  }
  .pin {
    width: 9px;
    height: 11px;
    flex: none;
  }
  .cross {
    width: 10px;
    height: 10px;
    flex: none;
    margin-left: 16px;
  }

  .market {
    height: 447px;
  }
  .mw-body {
    display: flex;
  }
  .mw-table {
    width: 251px;
    flex: none;
  }
  .mw-row {
    display: grid;
    grid-template-columns: 87px 63px 62px 36px;
    column-gap: 1px;
    height: 20.9px;
    line-height: 20.9px;
    white-space: nowrap;
  }
  .mw-row > span {
    display: block;
    box-sizing: border-box;
    color: #2a2a2a;
  }
  .mw-row .num {
    text-align: right;
    padding-right: 5px;
    overflow: hidden;
    direction: rtl;
    letter-spacing: 0.3px;
  }
  .mw-head {
    height: 20px;
    line-height: 20px;
    margin-top: 1px;
    margin-bottom: 1px;
    background: linear-gradient(#fbfbfb, #e6e8ec);
    border-bottom: 2px solid #8c8c8c;
    box-sizing: content-box;
  }
  .mw-head span {
    border-right: 1px solid #999;
    padding-left: 5px;
  }
  .mw-rows {
    height: 369px;
    overflow: hidden;
  }
  .mw-row.alt > span {
    background: #d9d9d9;
  }
  .sym {
    display: flex !important;
    align-items: center;
  }
  .mk-slot {
    width: 24px;
    flex: none;
    display: flex;
    align-items: center;
  }
  .mk {
    width: 15px;
    height: 15px;
    margin-left: 3px;
  }
  small {
    font-size: 11.5px;
  }
  .mw-row .rise {
    color: #3c8f3c;
  }
  .mw-row .fall {
    color: #c43c62;
  }
  .vbar {
    width: 6px;
    background: #8f8f8f;
    flex: none;
  }
  .mw-vbar {
    height: 205px;
    margin: 22px 0 0 9px;
  }
  .hbar {
    height: 6px;
    width: 164px;
    margin: 8px 0 0 21px;
    background: #8f8f8f;
  }

  .margin .p-head {
    height: 31px;
  }
  .m-body {
    display: flex;
    height: 161px;
  }
  .m-list {
    width: 251px;
    flex: none;
    box-sizing: border-box;
    padding: 8px 8px 0 10px;
    background: #d4d0c8;
    font-family: "DejaVu Sans", sans-serif;
    font-weight: 700;
    font-size: 12.5px;
    color: #1a1a1a;
  }
  .m-row {
    height: 22px;
    line-height: 22px;
    display: flex;
    justify-content: space-between;
  }
  .m-vbar {
    height: 83px;
    margin: 21px 0 0 9px;
  }

  .tabs {
    display: flex;
    height: 24px;
    background: #f2f4f9;
    border-top: 1px solid #bfc3c9;
  }
  .left-tabs {
    margin-top: 3px;
  }
  .tab {
    box-sizing: border-box;
    display: flex;
    align-items: center;
    gap: 2px;
    height: 24px;
    font-size: 14px;
    padding-left: 2px;
    white-space: nowrap;
    border-right: 1px solid #9aa0a8;
    border-bottom: 1px solid #9aa0a8;
    margin-top: -1px;
    overflow: hidden;
  }
  .tab .ico {
    width: 21px;
    height: 21px;
  }
  .tab.on {
    background: #fff;
    border-bottom-color: #fff;
  }
  .lt-1 {
    width: 93px;
  }
  .lt-2 {
    width: 90px;
  }
  .lt-3 {
    width: 90px;
  }

  /* chart */
  .main {
    width: 1459px;
    flex: none;
    box-sizing: border-box;
    border-left: 2px solid #8a8a7c;
    border-right: 1px solid #b8b8b0;
    border-bottom: 1px solid #b0b0a8;
    display: flex;
    flex-direction: column;
    background: #fff;
  }
  .tabstrip {
    height: 32px;
    flex: none;
    box-sizing: border-box;
    background: #e7e5dc;
    border-top: 1px solid #aca899;
    border-bottom: 2px solid #aca899;
    display: flex;
    align-items: flex-end;
    position: relative;
  }
  .ctab {
    height: 24px;
    box-sizing: border-box;
    background: #ecebe4;
    border: 1px solid #aca899;
    border-bottom: 0;
    border-radius: 6px 4px 0 0;
    line-height: 22px;
    text-align: center;
    font-size: 14px;
    color: #333;
  }
  .ctab.on {
    background: #fff;
    border-radius: 12px 4px 0 0;
  }
  .ct-1 {
    width: 130px;
  }
  .ct-2 {
    width: 116px;
  }
  .ct-3 {
    width: 117px;
  }
  .ct-4 {
    width: 188px;
  }
  .strip-drop {
    margin-left: auto;
    margin-bottom: 9px;
    border: 4px solid transparent;
    border-top: 5px solid #111;
    border-bottom: 0;
  }
  .strip-x {
    width: 10px;
    height: 10px;
    margin: 0 10px 6px 17px;
  }
  .chart {
    width: 1457px;
    height: 637px;
    display: block;
    font-family: "Liberation Sans", sans-serif;
  }
  .grid-v {
    stroke: #d6c0ca;
    stroke-dasharray: 3 3;
    fill: none;
  }
  .grid-h {
    stroke: #d6cdd1;
    stroke-dasharray: 3 3;
    fill: none;
  }
  .axis {
    font-size: 12.5px;
    fill: #222;
  }
  .axis.tag {
    fill: #fff;
  }
  .scale-btn {
    font-family: "Liberation Sans", "DejaVu Sans", sans-serif;
  }
  .label {
    font-size: 12.5px;
    fill: #333;
  }
  .ma {
    fill: none;
    stroke: #111;
    stroke-width: 1;
  }
  .red {
    fill: #e3101a;
    stroke: #200;
    stroke-width: 1;
  }
  .green {
    fill: #116f16;
    stroke: #020;
    stroke-width: 1;
  }
  .mark-up {
    fill: none;
    stroke: #4ed864;
    stroke-width: 1.3;
  }
  .mark-dn {
    fill: none;
    stroke: #cf3a55;
    stroke-width: 1.2;
  }
  .rsi {
    fill: none;
    stroke: #7a1f2e;
    stroke-width: 0.9;
  }
  .rsi-ma {
    fill: none;
    stroke: #a01828;
    stroke-width: 1.2;
  }

  /* bottom panel */
  .bottom {
    flex: 1;
    min-height: 0;
    display: flex;
    flex-direction: column;
    padding-top: 7px;
    box-sizing: border-box;
  }
  .b-head {
    height: 30px;
    flex: none;
    display: flex;
    align-items: center;
    padding-left: 2px;
    font-size: 14px;
    color: #3a3a3a;
  }
  .b-head span {
    width: 1692px;
  }
  .b-body {
    display: flex;
    height: 135px;
    flex: none;
    background: #f2f2f2;
  }
  .b-table {
    width: 1720px;
    flex: none;
    background: #fff;
  }
  .b-row {
    display: grid;
    grid-template-columns: repeat(8, 99.9px);
    height: 18px;
    line-height: 18px;
    border-bottom: 1px solid transparent;
    box-sizing: border-box;
    font-size: 13px;
  }
  .b-rows .b-row {
    border-bottom-color: #efefef;
  }
  .b-rows {
    margin-top: 3px;
  }
  .b-row > span {
    padding: 0 4px;
    white-space: nowrap;
    overflow: hidden;
  }
  .b-row .num {
    text-align: right;
  }
  .b-row.alt > span {
    background: #d9d9d9;
  }
  .b-titles {
    height: 20px;
    line-height: 19px;
    border-bottom: 2px solid #8c8c8c;
    background: linear-gradient(#fbfbfb, #e6e8ec);
  }
  .b-titles span {
    border-right: 1px solid #999;
  }
  .b-vbar {
    height: 20px;
    margin: 23px 0 0 7px;
  }
  .bottom-tabs {
    margin-top: 1px;
    flex: none;
    background: transparent;
    border-top: 1px solid #a0a4a8;
  }
  .bt-1 {
    width: 162px;
  }
  .bt-2 {
    width: 128px;
  }
  .bt-3 {
    width: 77px;
  }
  .bt-4 {
    width: 70px;
  }
  .bt-5 {
    width: 70px;
  }
  .bt-6 {
    width: 103px;
  }

  /* deal panels */
  .deals {
    width: 179px;
    flex: none;
  }
  .deal {
    margin-bottom: 8px;
  }
  .d-head {
    height: 30px;
    display: flex;
    align-items: center;
    padding: 0 0 2px 6px;
    box-sizing: border-box;
    font-size: 14px;
    color: #444;
  }
  .d-name {
    width: 103px;
    white-space: nowrap;
  }
  .d-drop {
    margin-right: 20px;
    border: 4px solid transparent;
    border-top: 4px solid #555;
    border-bottom: 0;
    margin-top: 4px;
  }
  .d-head .cross {
    margin-left: 17px;
  }
  .d-title {
    height: 30px;
    line-height: 30px;
    text-align: center;
    font-family: "DejaVu Sans", sans-serif;
    font-weight: 700;
    font-size: 17px;
    color: #111;
    width: 184px;
    margin-left: -1px;
  }
  .quote {
    width: 169px;
    margin-left: 7px;
    height: 81px;
    display: grid;
    grid-template-columns: 84px 85px;
    position: relative;
  }
  .quote.short {
    height: 73px;
  }
  .side {
    display: flex;
    flex-direction: column;
    overflow: hidden;
    min-width: 0;
  }
  .sell {
    background: #7e0010;
    color: #fbe6e8;
  }
  .buy {
    background: #0c4f0c;
    color: #e8f6e4;
  }
  .price {
    flex: 1;
    display: flex;
    align-items: center;
    white-space: nowrap;
    font-family: "DejaVu Sans", sans-serif;
    font-weight: 700;
  }
  .p-sm {
    font-size: 15px;
    align-self: flex-start;
    margin-top: 8px;
    margin-left: -1px;
  }
  .p-big {
    font-family: "Noto Sans", sans-serif;
    font-weight: 400;
    font-size: 35px;
    line-height: 1;
  }
  .p-end {
    font-size: 13px;
    margin-top: 16px;
  }
  .flat {
    font-size: 17px;
    width: 100%;
    text-align: center;
    margin-bottom: 4px;
  }
  .verb {
    height: 24px;
    line-height: 22px;
    font-size: 19px;
  }
  .sell .verb {
    padding-left: 9px;
  }
  .buy .verb {
    padding-left: 38px;
  }
  .spread {
    position: absolute;
    left: 58px;
    bottom: 0;
    width: 51px;
    height: 24px;
    line-height: 24px;
    background: #f0f4fb;
    text-align: center;
    font-family: "DejaVu Sans", sans-serif;
    font-weight: 700;
    font-size: 14px;
    color: #111;
  }
  .vol {
    margin: 4px 0 0 7px;
    display: flex;
    height: 24px;
  }
  .vol-box {
    width: 118px;
    box-sizing: border-box;
    border: 1px solid #111;
    background: #fff;
    text-align: right;
    padding-right: 1px;
    line-height: 22px;
    font-family: "DejaVu Sans", sans-serif;
    font-weight: 700;
    font-size: 15.5px;
    color: #111;
    white-space: nowrap;
  }
  .spin {
    width: 25px;
    display: flex;
    flex-direction: column;
    box-sizing: border-box;
    border: 1px solid #a0a0a0;
    border-right-color: #777;
    border-bottom-color: #777;
  }
  .spin span {
    flex: 1;
    background: linear-gradient(#f2f2f2, #d8d8d8);
    display: flex;
    align-items: center;
    justify-content: center;
  }
  .spin .up {
    border: 3px solid transparent;
    border-bottom: 3px solid #111;
    border-top: 0;
  }
  .spin .dn {
    border: 3px solid transparent;
    border-top: 3px solid #111;
    border-bottom: 0;
  }
  .lock {
    width: 21px;
    margin-left: 3px;
    box-sizing: border-box;
    background: #9fb0c4;
    border-left: 2px solid #6a6a6a;
    border-top: 2px solid #6a6a6a;
    display: flex;
    align-items: center;
    justify-content: center;
  }
  .lock svg {
    width: 14px;
    height: 18px;
  }

  /* status bar */
  .status {
    flex: 1;
    display: flex;
    align-items: flex-end;
    font-size: 14px;
    color: #333;
  }
  .ws {
    width: 130px;
    height: 19px;
    flex: none;
    box-sizing: border-box;
    background: #fff;
    padding-left: 2px;
    line-height: 18px;
    display: flex;
    justify-content: space-between;
    align-items: center;
  }
  .ws i {
    margin-right: 4px;
    border: 3px solid transparent;
    border-top: 3px solid #222;
    border-bottom: 0;
  }
  .ready {
    width: 806px;
    flex: none;
    padding-left: 9px;
    box-sizing: border-box;
    height: 19px;
    line-height: 18px;
  }
  .cell {
    height: 21px;
    flex: none;
    box-sizing: border-box;
    border: 1px solid #a8acb2;
    border-bottom: 0;
    margin-right: 3px;
    line-height: 20px;
    white-space: nowrap;
    overflow: hidden;
    padding-left: 2px;
  }
  .c1 {
    width: 231px;
  }
  .c2 {
    width: 129px;
  }
  .c3 {
    width: 86px;
  }
  .c4 {
    width: 186px;
  }
  .c5 {
    width: 21px;
    padding: 0;
  }
  .c5 svg {
    width: 18px;
    height: 18px;
  }
  .c6 {
    width: 45px;
    margin-right: 0;
  }
</style>
